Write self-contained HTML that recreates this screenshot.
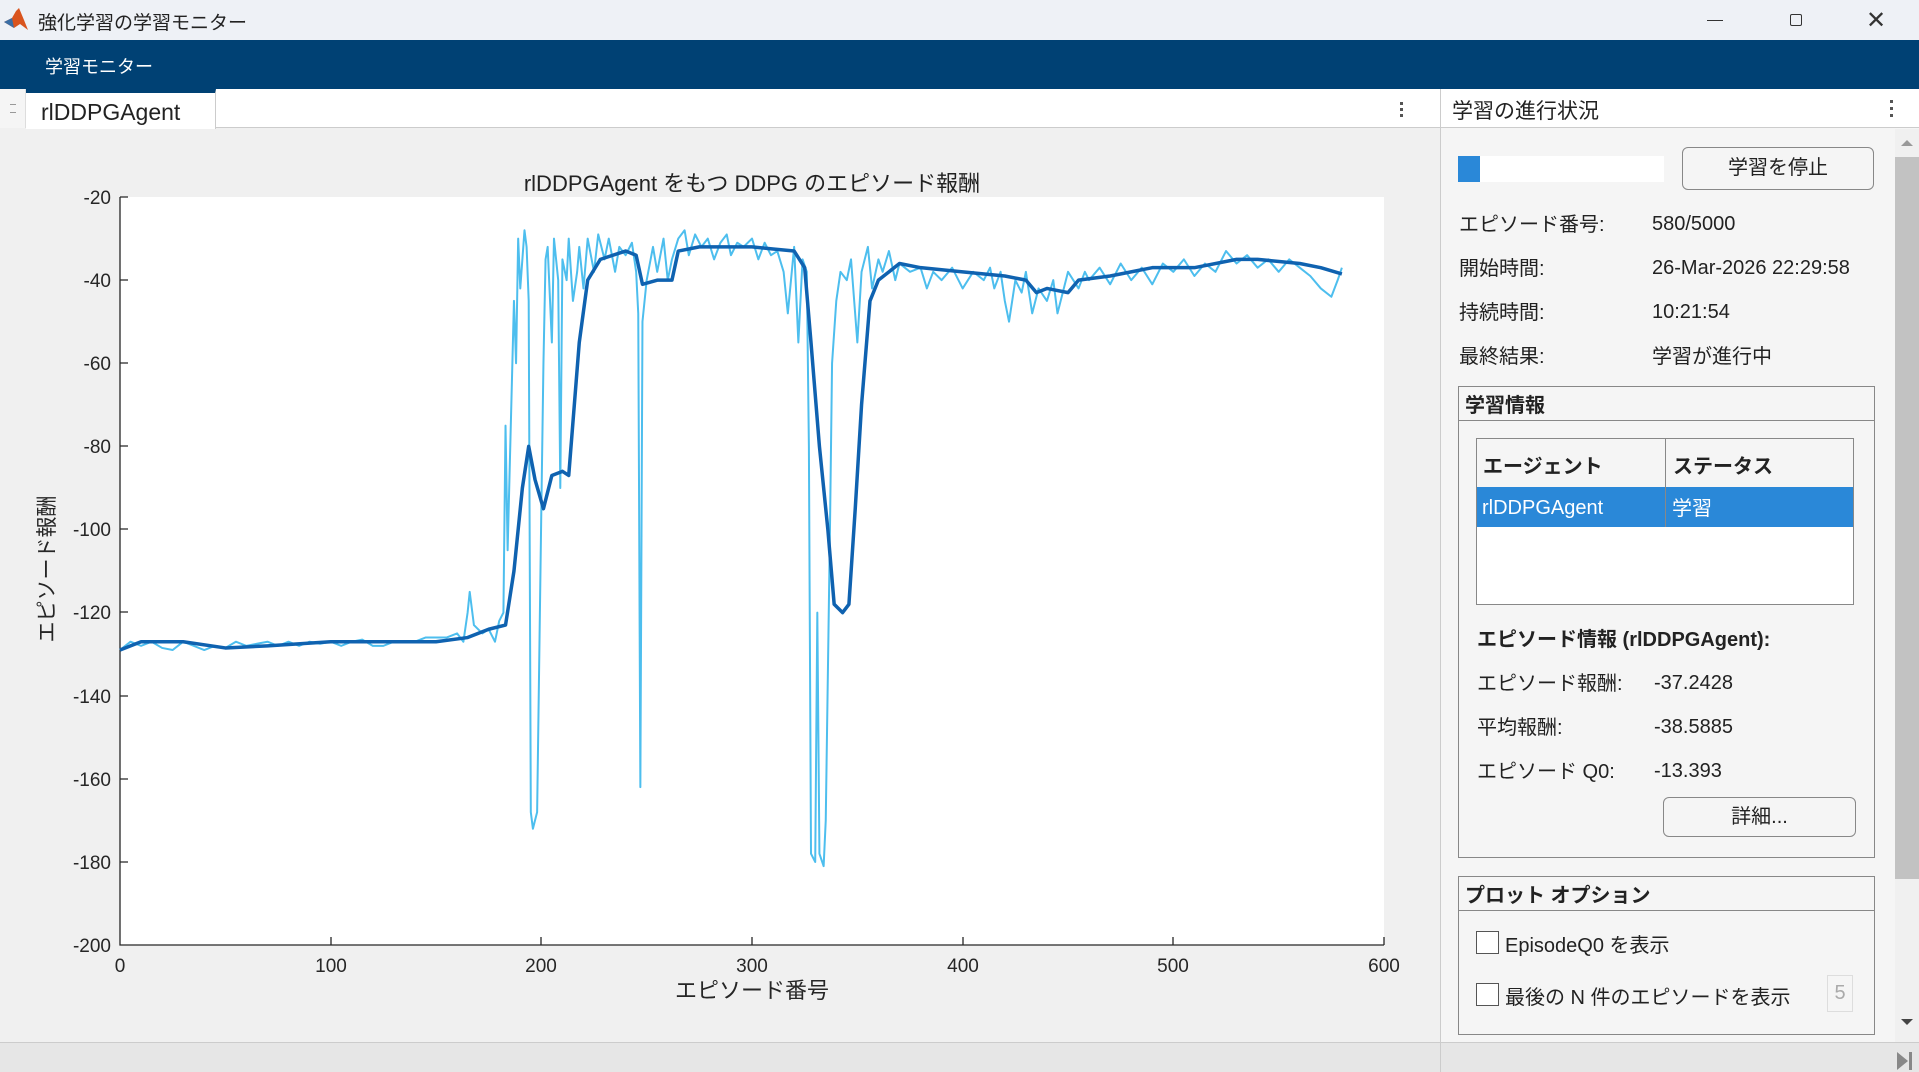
<!DOCTYPE html>
<html><head><meta charset="utf-8"><style>
*{margin:0;padding:0;box-sizing:border-box}
body{width:1919px;height:1072px;overflow:hidden;background:#f0f0f0;font-family:"Liberation Sans","Noto Sans CJK JP",sans-serif;position:relative;color:#222}
.a{position:absolute}
.t{font-size:20px;white-space:nowrap}
.v{margin-top:3px}
.l{margin-top:-2px}
</style></head><body>
<div class="a" style="left:0;top:0;width:1919px;height:40px;background:#eef1f6"></div>
<svg class="a" style="left:2px;top:6px" width="28" height="28" viewBox="0 0 28 28"><path d="M2 16 L10 12 L14 5 L17 2 L22 14 L26 24 L18 18 L12 22 Z" fill="#d9541e"/><path d="M2 16 L10 12 L12 22 Z" fill="#3a6ea5"/></svg>
<div class="a t" style="left:38px;top:8px;font-size:19px;color:#222">強化学習の学習モニター</div>
<div class="a" style="left:1707px;top:20px;width:16px;height:1px;background:#333"></div>
<div class="a" style="left:1790px;top:14px;width:12px;height:12px;border:1.5px solid #333;border-radius:2px"></div>
<div class="a t" style="left:1866px;top:6px;font-size:24px;color:#333">✕</div>
<div class="a" style="left:0;top:40px;width:1919px;height:49px;background:#004174"></div>
<div class="a t" style="left:45px;top:53px;font-size:18px;color:#fff">学習モニター</div>
<div class="a" style="left:0;top:89px;width:1440px;height:39px;background:#fff;border-bottom:1px solid #ccc"></div>
<div class="a" style="left:0;top:89px;width:26px;height:39px;background:#f5f5f5;border-right:1px solid #ddd"></div>
<div class="a" style="left:10px;top:104px;width:6px;height:9px;border-top:1px solid #999;border-bottom:1px solid #999"></div>
<div class="a" style="left:26px;top:89px;width:190px;height:40px;background:#fff;border-top:4px solid #004174;border-right:1px solid #ccc"></div>
<div class="a t" style="left:41px;top:99px;font-size:23px;color:#222">rlDDPGAgent</div>
<div class="a" style="left:1400px;top:102px;width:3px;height:3px;background:#555;box-shadow:0 6px #555,0 12px #555"></div>
<div class="a" style="left:0;top:129px;width:1440px;height:913px;background:#f0f0f0"></div>
<div class="a" style="left:120px;top:197px;width:1264px;height:748px;background:#fff"></div>
<div class="a t" style="left:0;width:1504px;top:166px;text-align:center;font-size:22px;color:#222">rlDDPGAgent をもつ DDPG のエピソード報酬</div>
<svg class="a" style="left:0;top:0" width="1440" height="1042">
<g stroke="#262626" stroke-width="1.3" fill="none">
<path d="M120 197 V945 H1384"/>
<path d="M120 197h8M120 280h8M120 363h8M120 446h8M120 529h8M120 612h8M120 696h8M120 779h8M120 862h8"/>
<path d="M331 945v-8M541 945v-8M752 945v-8M963 945v-8M1173 945v-8M1384 945v-8"/>
</g>
<g font-family="Liberation Sans,sans-serif" font-size="19" fill="#262626" text-anchor="end">
<text x="111" y="204">-20</text><text x="111" y="287">-40</text><text x="111" y="370">-60</text><text x="111" y="453">-80</text><text x="111" y="536">-100</text><text x="111" y="619">-120</text><text x="111" y="703">-140</text><text x="111" y="786">-160</text><text x="111" y="869">-180</text><text x="111" y="952">-200</text>
</g>
<g font-family="Liberation Sans,sans-serif" font-size="19" fill="#262626" text-anchor="middle">
<text x="120" y="972">0</text><text x="331" y="972">100</text><text x="541" y="972">200</text><text x="752" y="972">300</text><text x="963" y="972">400</text><text x="1173" y="972">500</text><text x="1384" y="972">600</text>
<text x="752" y="998" font-size="22" font-family="Liberation Sans,Noto Sans CJK JP,sans-serif">エピソード番号</text>
<text transform="translate(54 569) rotate(-90)" font-size="21" font-family="Liberation Sans,Noto Sans CJK JP,sans-serif">エピソード報酬</text>
</g>
<g transform="matrix(2.1067 0 0 -4.156 120 113.9)" fill="none" stroke-linejoin="round">
<polyline vector-effect="non-scaling-stroke" stroke="#4dbeee" stroke-width="2" points="0,-129 5,-127 10,-128 15,-127 20,-128.5 25,-129 30,-127 35,-128 40,-129 45,-128 50,-128.5 55,-127 60,-128 65,-127.5 70,-127 75,-128 80,-127 85,-128 90,-127 95,-127.5 100,-127 105,-128 110,-127 115,-126.5 120,-128 125,-128 130,-127 135,-127 140,-127 145,-126 150,-126 155,-126 160,-125 163,-127 165,-120 166,-115 168,-123 172,-125 175,-124 178,-127 180,-122 182,-120 183,-75 184,-105 185,-85 186,-65 187,-45 188,-60 189,-30 190,-42 191,-35 192,-28 193,-32 194,-45 195,-168 196,-172 197,-170 198,-168 200,-95 201,-60 202,-35 203,-32 205,-55 206,-30 208,-40 209,-90 210,-35 212,-40 213,-30 215,-45 217,-38 218,-32 220,-42 222,-30 225,-38 227,-29 230,-35 232,-30 235,-38 237,-32 240,-34 243,-31 245,-38 246,-48 247,-162 248,-50 250,-40 253,-32 255,-38 258,-30 260,-40 262,-35 265,-30 268,-28 270,-34 273,-29 276,-32 279,-30 282,-35 285,-31 288,-29 290,-34 293,-31 296,-32 300,-30 303,-35 306,-31 309,-34 312,-33 315,-38 317,-48 320,-32 322,-55 324,-35 326,-38 327,-80 328,-178 330,-180 331,-120 332,-178 334,-181 335,-170 337,-100 338,-60 340,-45 342,-38 345,-40 347,-35 350,-55 352,-38 355,-32 357,-42 360,-35 362,-38 365,-33 368,-40 370,-36 375,-38 380,-37 383,-42 386,-38 390,-40 395,-37 400,-42 405,-38 410,-40 413,-37 415,-42 418,-38 420,-45 422,-50 425,-40 428,-43 430,-38 433,-48 436,-42 440,-45 443,-40 445,-48 448,-42 450,-38 455,-42 458,-38 460,-40 465,-37 470,-41 475,-36 480,-40 485,-37 490,-41 495,-36 500,-38 505,-35 510,-39 515,-36 520,-38 525,-33 530,-36 535,-34 540,-37 545,-35 550,-38 555,-35 560,-37 565,-39 570,-42 575,-44 578,-40 580,-37"/>
<polyline vector-effect="non-scaling-stroke" stroke="#0f62b0" stroke-width="3.5" points="0,-129 10,-127 30,-127 50,-128.5 70,-128 100,-127 150,-127 165,-126 175,-124 183,-123 187,-110 191,-90 194,-80 197,-88 201,-95 205,-87 210,-86 213,-87 218,-55 222,-40 228,-35 240,-33 245,-34 248,-41 255,-40 262,-40 265,-33 275,-32 300,-32 310,-32.5 320,-33 325,-37 328,-55 332,-80 336,-100 339,-118 343,-120 346,-118 349,-95 352,-70 356,-45 360,-40 365,-38 370,-36 380,-37 400,-38 420,-39 430,-40 435,-43 440,-42 450,-43 455,-40 470,-39 490,-37 510,-37 530,-35 540,-35 560,-36 570,-37 580,-38.5"/>
</g>
</svg>
<div class="a" style="left:1440px;top:89px;width:479px;height:953px;background:#f5f5f5;border-left:1px solid #ccc"></div>
<div class="a" style="left:1441px;top:89px;width:478px;height:39px;background:#fff;border-bottom:1px solid #ccc"></div>
<div class="a t" style="left:1452px;top:95px;font-size:21px">学習の進行状況</div>
<div class="a" style="left:1890px;top:100px;width:3px;height:3px;background:#555;box-shadow:0 7px #555,0 14px #555"></div>
<div class="a" style="left:1895px;top:129px;width:24px;height:913px;background:#f0f0f0"></div>
<div class="a" style="left:1895px;top:157px;width:24px;height:722px;background:#c2c2c2"></div>
<div class="a" style="left:1901px;top:140px;border:6px solid transparent;border-bottom:6px solid #999;border-top:0"></div>
<div class="a" style="left:1901px;top:1019px;border:6px solid transparent;border-top:6px solid #444;border-bottom:0"></div>
<div class="a" style="left:1458px;top:156px;width:206px;height:26px;background:#fff"></div>
<div class="a" style="left:1458px;top:156px;width:22px;height:26px;background:#2a88d8"></div>
<div class="a t" style="left:1682px;top:147px;width:192px;height:43px;border:1px solid #888;border-radius:6px;background:#f5f5f5;text-align:center;line-height:41px;font-size:20px">学習を停止</div>
<div class="a t l" style="left:1459px;top:210px">エピソード番号:</div><div class="a t v" style="left:1652px;top:210px">580/5000</div>
<div class="a t l" style="left:1459px;top:254px">開始時間:</div><div class="a t v" style="left:1652px;top:254px">26-Mar-2026 22:29:58</div>
<div class="a t l" style="left:1459px;top:298px">持続時間:</div><div class="a t v" style="left:1652px;top:298px">10:21:54</div>
<div class="a t l" style="left:1459px;top:342px">最終結果:</div><div class="a t l" style="left:1652px;top:342px">学習が進行中</div>
<div class="a" style="left:1458px;top:386px;width:417px;height:472px;border:1px solid #888"></div>
<div class="a" style="left:1458px;top:420px;width:417px;height:1px;background:#888"></div>
<div class="a t l" style="left:1465px;top:391px;font-weight:bold">学習情報</div>
<div class="a" style="left:1476px;top:438px;width:378px;height:167px;border:1px solid #888;background:#fff"></div>
<div class="a" style="left:1477px;top:439px;width:376px;height:48px;background:#f5f5f5"></div>
<div class="a" style="left:1477px;top:487px;width:376px;height:40px;background:#2a88d8"></div>
<div class="a" style="left:1665px;top:439px;width:1px;height:88px;background:#888"></div>
<div class="a t l" style="left:1483px;top:452px;font-weight:bold">エージェント</div>
<div class="a t l" style="left:1673px;top:452px;font-weight:bold">ステータス</div>
<div class="a t v" style="left:1482px;top:494px;color:#fff">rlDDPGAgent</div>
<div class="a t l" style="left:1672px;top:494px;color:#fff">学習</div>
<div class="a t l" style="left:1477px;top:625px;font-weight:bold">エピソード情報 (rlDDPGAgent):</div>
<div class="a t l" style="left:1477px;top:669px">エピソード報酬:</div><div class="a t v" style="left:1654px;top:669px">-37.2428</div>
<div class="a t l" style="left:1477px;top:713px">平均報酬:</div><div class="a t v" style="left:1654px;top:713px">-38.5885</div>
<div class="a t l" style="left:1477px;top:757px">エピソード Q0:</div><div class="a t v" style="left:1654px;top:757px">-13.393</div>
<div class="a t" style="left:1663px;top:797px;width:193px;height:40px;border:1px solid #888;border-radius:6px;text-align:center;line-height:38px">詳細...</div>
<div class="a" style="left:1458px;top:876px;width:417px;height:159px;border:1px solid #888"></div>
<div class="a" style="left:1458px;top:910px;width:417px;height:1px;background:#888"></div>
<div class="a t l" style="left:1465px;top:881px;font-weight:bold">プロット オプション</div>
<div class="a" style="left:1476px;top:931px;width:23px;height:23px;border:1px solid #555;background:#fff"></div>
<div class="a t l" style="left:1505px;top:931px">EpisodeQ0 を表示</div>
<div class="a" style="left:1476px;top:983px;width:23px;height:23px;border:1px solid #555;background:#fff"></div>
<div class="a t l" style="left:1505px;top:983px">最後の N 件のエピソードを表示</div>
<div class="a t" style="left:1827px;top:975px;width:26px;height:37px;border:1px solid #ddd;color:#aaa;text-align:center;line-height:35px">5</div>
<div class="a" style="left:0;top:1042px;width:1919px;height:30px;background:#e6e6e6;border-top:1px solid #ccc"></div>
<div class="a" style="left:1440px;top:1042px;width:1px;height:30px;background:#ccc"></div>
<div class="a" style="left:1897px;top:1052px;border-top:9px solid transparent;border-bottom:9px solid transparent;border-left:11px solid #888"></div>
<div class="a" style="left:1909px;top:1052px;width:3px;height:18px;background:#888"></div>
</body></html>
